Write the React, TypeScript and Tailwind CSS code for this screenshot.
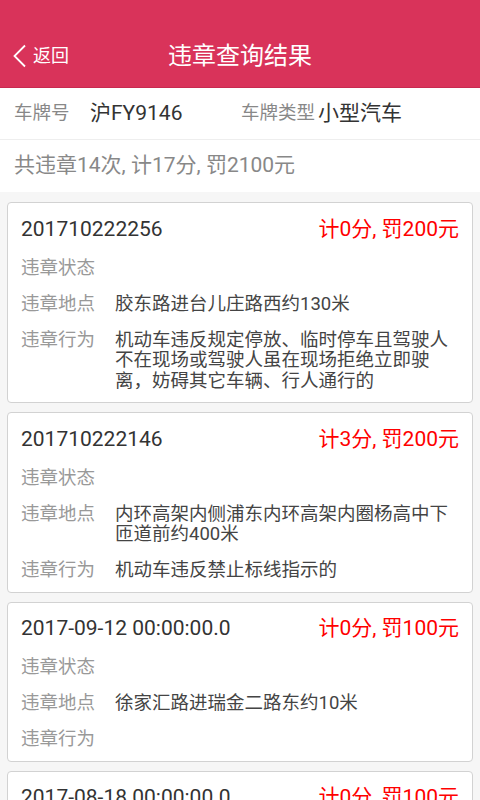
import React from "react";

const records = [
  {
    id: "201710222256",
    fine: "计0分, 罚200元",
    status: "",
    place: "胶东路进台儿庄路西约130米",
    act: "机动车违反规定停放、临时停车且驾驶人不在现场或驾驶人虽在现场拒绝立即驶离，妨碍其它车辆、行人通行的",
  },
  {
    id: "201710222146",
    fine: "计3分, 罚200元",
    status: "",
    place: "内环高架内侧浦东内环高架内圈杨高中下匝道前约400米",
    act: "机动车违反禁止标线指示的",
  },
  {
    id: "2017-09-12 00:00:00.0",
    fine: "计0分, 罚100元",
    status: "",
    place: "徐家汇路进瑞金二路东约10米",
    act: "",
  },
  {
    id: "2017-08-18 00:00:00.0",
    fine: "计0分, 罚100元",
    status: "",
    place: "徐家汇路进瑞金二路东约10米",
    act: "",
  },
];

function Row({ label, value }: { label: string; value: string }) {
  return (
    <div className="flex text-[18.5px] leading-[20.5px]">
      <span className="w-[94px] shrink-0 text-[#999]">{label}</span>
      <span className="flex-1 text-[#444]">{value}</span>
    </div>
  );
}

export default function App() {
  return (
    <div className="min-h-[800px] bg-[#f6f6f6]" style={{ fontFamily: "Roboto, 'Noto Sans CJK SC', sans-serif" }}>
      <div className="h-[88px] bg-[#d9335a] pt-[24px] border-b border-[#c82a50]">
        <div className="relative flex h-[63px] items-center justify-center">
          <div className="absolute left-[12px] top-0 flex h-full items-center gap-[5px] text-white">
            <svg width="16" height="24" viewBox="0 0 16 24" fill="none">
              <path d="M13 1.5 L2.5 12 L13 22.5" stroke="white" strokeWidth="1.8" />
            </svg>
            <span className="text-[18px]">返回</span>
          </div>
          <span className="text-[24px] text-white">违章查询结果</span>
        </div>
      </div>

      <div className="flex h-[52px] items-center bg-white px-[14px] border-b border-[#eeeeee]">
        <div className="flex w-[227px] items-center">
          <span className="w-[76px] text-[18.5px] text-[#888]">车牌号</span>
          <span className="text-[21px] text-[#333]">沪FY9146</span>
        </div>
        <div className="flex items-center">
          <span className="text-[18.5px] text-[#888]">车牌类型</span>
          <span className="ml-[3px] text-[21px] text-[#333]">小型汽车</span>
        </div>
      </div>

      <div className="flex h-[52px] items-center bg-white px-[14px]">
        <span className="text-[21px] text-[#888]">共违章14次, 计17分, 罚2100元</span>
      </div>

      <div className="flex flex-col gap-[9px] px-[7px] pt-[10px] pb-[10px]">
        {records.map((r, i) => (
          <div key={i} className="rounded-[4px] border border-[#d2d2d2] bg-white px-[13px] pt-[13.5px] pb-[11px]">
            <div className="flex items-center justify-between leading-[24px]">
              <span className="text-[21px] text-[#333]">{r.id}</span>
              <span className="text-[21px] text-[#ff0000]">{r.fine}</span>
            </div>
            <div className="mt-[17px] flex flex-col gap-[15.5px]">
              <Row label="违章状态" value={r.status} />
              <Row label="违章地点" value={r.place} />
              <Row label="违章行为" value={r.act} />
            </div>
          </div>
        ))}
      </div>
    </div>
  );
}
